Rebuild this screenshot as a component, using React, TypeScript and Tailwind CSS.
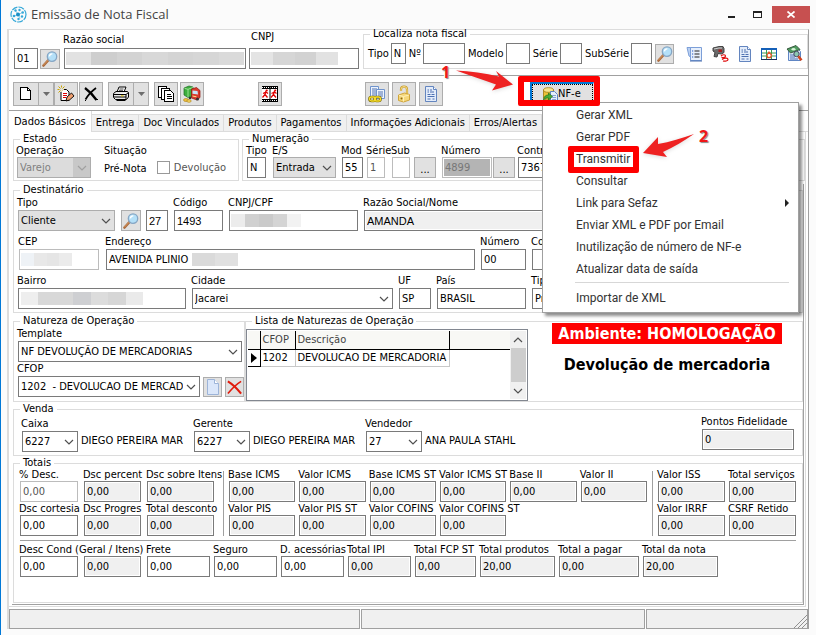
import { useId } from "react";
import type { ReactNode } from "react";
import clsx from "clsx";

// ─── Icons ────────────────────────────────────────────────────────────────────

function LogoIcon() {
  return (
    <svg width="17" height="17" viewBox="0 0 17 17" fill="none">
      <circle cx="8.500" cy="8.500" r="7.500" stroke="#35a8d8" strokeWidth="1.200" strokeDasharray="6 1" />
      <path d="M8.500 8.500 5.500 5M8.500 8.500l4-2M8.500 8.500l1.500 4M8.500 8.500l-4 1.500" stroke="#8fd0ea" />
      <circle cx="8" cy="8.500" r="2" fill="#1b8fc6" />
      <circle cx="5.500" cy="4.500" r="1.200" fill="#35a8d8" />
      <circle cx="9.500" cy="4" r="1.200" fill="#35a8d8" />
      <circle cx="12.700" cy="6.500" r="1.300" fill="#35a8d8" />
      <circle cx="12" cy="10.500" r="1.200" fill="#35a8d8" />
      <circle cx="8.500" cy="13" r="1.200" fill="#35a8d8" />
      <circle cx="4" cy="10" r="1.300" fill="#35a8d8" />
    </svg>
  );
}

function SearchIcon() {
  return (
    <svg width="16" height="16" viewBox="0 0 16 16" fill="none">
      <path d="m1.500 14.500 5-5.500" stroke="#a9683a" strokeWidth="2.600" strokeLinecap="round" />
      <path d="m1.500 14 5-5.200" stroke="#dba06a" strokeWidth="0.900" strokeLinecap="round" />
      <circle cx="10" cy="5.600" r="4.700" fill="#b4e0f8" stroke="#86a6c4" strokeWidth="1.300" />
      <path d="M7.400 5.400c.2-1.600 1.400-2.600 3-2.500" stroke="#fff" strokeWidth="1.400" />
    </svg>
  );
}

function NewIcon() {
  return (
    <svg width="14" height="16" viewBox="0 0 14 16" fill="#fff" stroke="#000" shapeRendering="crispEdges">
      <path d="M1.500 1.500h7l3 3v9h-10z" strokeWidth="1.200" />
      <path d="M8.500 1.500v3h3" fill="none" />
    </svg>
  );
}

function EditIcon() {
  return (
    <svg width="18" height="18" viewBox="0 0 18 18" fill="none">
      <path d="M1.500 1.500l2 2M5.500 5.500 7 7M7.500 1.500l-2 2M3.500 5.500l-2 2M4.500.5v2M4.500 6.500v2M.5 4.500h2M6.500 4.500h2" stroke="#caa400" />
      <path d="M4 7v8.500h8V7L9.500 4.500H7" fill="#fff" stroke="#000" />
      <path d="M6 8.500h4M6 10.500h4M6 12.500h3" stroke="#e00000" />
      <path d="m9 16 1-4 4.500-4L17 11l-4.500 4z" fill="#f0a070" stroke="#000" strokeWidth="0.900" />
    </svg>
  );
}

function CrossIcon() {
  return (
    <svg width="16" height="16" viewBox="0 0 16 16" fill="none" stroke="#000">
      <path d="M2 2c4 3 8 7 11.500 12" strokeWidth="2.200" />
      <path d="M13 2C9 5 5 9 2.500 13.500" strokeWidth="1.700" />
      <path d="M13 13.500h2M2 14.500h1" />
    </svg>
  );
}

function PrinterIcon() {
  return (
    <svg width="18" height="16" viewBox="0 0 18 16" fill="#fff" stroke="#000">
      <path d="m5 6 2-5h7l-2 5" />
      <path d="M7.500 3h4M7 4.700h4" strokeWidth="0.700" />
      <path d="M1.500 7.500 4 5.500h11.500l1 1.500v4l-2 2.500h-11l-2-2z" fill="#e8e8e8" />
      <path d="M1.500 8.500h12.500l2.500-2M2 11h12M14 8.500V13" />
      <path d="M9 9.800h2.500" stroke="#e0c000" />
      <path d="M4.500 14.500h9" />
    </svg>
  );
}

function CopiesIcon() {
  return (
    <svg width="18" height="18" viewBox="0 0 18 18" fill="#fff" stroke="#000" shapeRendering="crispEdges">
      <path d="M1.500 1.500h8v11h-8z" />
      <path d="M4.500 3.500h8v11h-8z" />
      <path d="M7.500 5.500h6l3 3v8h-9z" />
      <path d="M9.500 9.500h4M9.500 11.500h5M9.500 13.500h5" />
    </svg>
  );
}

function TruckIcon() {
  return (
    <svg width="18" height="18" viewBox="0 0 18 18">
      <path d="m1 3 5-2 4 1v9l-5 1.500L1 10z" fill="#3dae3d" stroke="#1e6b25" strokeWidth="0.700" />
      <path d="m1.500 3.300 3.500 1v8M5 4.300l5-1.800" stroke="#b4ecaa" strokeWidth="0.800" fill="none" />
      <path d="m8.500 4 5-1.500 3.500 3v7L14 15l-5.500-2z" fill="#d83a2c" stroke="#8d150d" strokeWidth="0.700" />
      <path d="m9.500 5.500 5 .5.500 3.500-5.500-.7z" fill="#c7e4f7" />
      <path d="m9.500 11 4 .8" stroke="#ffe08a" />
      <circle cx="14.500" cy="14" r="1.500" fill="#333" />
      <circle cx="7" cy="13" r="1.300" fill="#333" />
      <ellipse cx="3" cy="15" rx="2.500" ry="1.500" fill="#f0c040" stroke="#a97d10" strokeWidth="0.600" />
      <ellipse cx="6" cy="16" rx="2.200" ry="1.300" fill="#f7d765" stroke="#a97d10" strokeWidth="0.600" />
    </svg>
  );
}

function FilmIcon() {
  return (
    <svg width="18" height="18" viewBox="0 0 18 18" fill="none">
      <path d="M1 1h16v16H1z" fill="#fff" />
      <path d="M1 2.500h16M1 15.500h16" stroke="#000" strokeWidth="3" />
      <path d="M1 2.500h16M1 15.500h16" stroke="#fff" strokeDasharray="1 1" />
      <path d="M9 1v16M16.500 1v16" stroke="#000" />
      <path d="M5 6 4 9.500l-2.500 3M4 9.500l2.500 3M2 8.500 5 7l2 1.500" stroke="#e00000" strokeWidth="1.300" />
      <path d="m13.500 6-1 3.500-2.500 3M12.500 9.500l2.500 3M10.500 8.500l3-1.500 2 1.500" stroke="#e00000" strokeWidth="1.300" />
      <circle cx="5.700" cy="5.500" r="1.100" fill="#e00000" />
      <circle cx="14.200" cy="5.500" r="1.100" fill="#e00000" />
    </svg>
  );
}

function LinkDocIcon() {
  return (
    <svg width="18" height="18" viewBox="0 0 18 18" fill="#eef4fd" stroke="#6f93cc">
      <path d="M2.500 1.500h8v11h-8z" />
      <path d="M4 4h5M4 6h4M4 8h4M4 10h4" stroke="#3c62a8" strokeWidth="0.900" />
      <path d="M8.500 4.500h8v9h-8z" />
      <path d="M10 7h5M10 9h5M10 11h5" stroke="#3c62a8" strokeWidth="0.900" />
      <g fill="none" stroke="#7c6a00" strokeWidth="2.600">
        <rect x="1.500" y="12" width="6" height="4" rx="2" />
        <rect x="6.500" y="12" width="6" height="4" rx="2" />
      </g>
      <g fill="none" stroke="#f5dc2c" strokeWidth="1.300">
        <rect x="1.500" y="12" width="6" height="4" rx="2" />
        <rect x="6.500" y="12" width="6" height="4" rx="2" />
      </g>
    </svg>
  );
}

function LockIcon() {
  return (
    <svg width="16" height="18" viewBox="0 0 16 18">
      <path d="M5 6V4.500a3 3 0 0 1 6 0V9" fill="none" stroke="#c79a28" strokeWidth="2.200" />
      <path d="M5 6V4.500a3 3 0 0 1 6 0V9" fill="none" stroke="#f7dd88" />
      <path d="m2.500 10 6-2 5 1.500v5.500l-6 2-5-1.500z" fill="#f5d77a" stroke="#d0a53a" />
      <path d="m3 10.300 4.500 1.200v5M7.500 11.500l5.500-1.500" fill="none" stroke="#fff0b5" />
      <circle cx="5.500" cy="13.500" r="1" fill="#8d6a10" />
    </svg>
  );
}

function DocIcon() {
  return (
    <svg width="14" height="16" viewBox="0 0 14 16" fill="#e3ecfa" stroke="#6385bf">
      <path d="M1.500.5h8l3 3v12h-11z" />
      <path d="M9.500.5v3h3" fill="#fff" />
      <path d="M3.500 4H5M6 4h2M3.500 6H5M6 6h4M3.500 8.500h3M7.500 8.500h3M3.500 10.500h7M3.500 13h3M8.500 13h2" stroke="#3c62a8" strokeWidth="0.900" />
    </svg>
  );
}

function ListIcon() {
  return (
    <svg width="17" height="16" viewBox="0 0 17 16" fill="#e6effc" stroke="#7c9fd8">
      <path d="M1 1.500h4.500v10L3 10z" fill="#b9d0f3" />
      <path d="M4.500 1.500h11v13h-11z" />
      <path d="M8.500 5h5M8.500 8h5M8.500 11h5" stroke="#222" />
      <path d="M6 5h1.200M6 8h1.200M6 11h1.200" stroke="#2256c0" strokeWidth="1.200" />
      <path d="M4 15h12" stroke="#4b6fae" />
    </svg>
  );
}

function ScannerIcon() {
  return (
    <svg width="17" height="16" viewBox="0 0 17 16" fill="none">
      <path d="m1 2 6-1.500h4l1 2v4L9.500 8 6 7.500l-1 3.500-3-.5L3 6.500 1 5z" fill="#6a6a6a" stroke="#444" />
      <path d="m2 3 5-1h3" stroke="#cfcfcf" />
      <rect x="6.500" y="3.500" width="3.500" height="2.500" fill="#a82020" />
      <path d="M9 10c2-1.800 4.500-1.500 4.500 0s-2 1.800-4 1.300M10 13.500c3-2 6-1.500 6 0s-3 2-5 1.500" stroke="#e01010" strokeWidth="1.200" />
    </svg>
  );
}

function TableIcon() {
  return (
    <svg width="16" height="14" viewBox="0 0 16 14" fill="none">
      <path d="M.5 1.500h15v11H.5z" fill="#fff" stroke="#1560b8" />
      <path d="M0 2h16" stroke="#1560b8" strokeWidth="2" />
      <path d="M1 6h14M1 9h14M5.500 3v9M10.500 3v9" stroke="#3a9c50" />
      <path d="M6 8 8 5l2.500 3-1 2.500h-3z" fill="#fff" stroke="#e8572a" strokeWidth="1.300" />
      <path d="M0 12.500h16" stroke="#1b2f55" />
    </svg>
  );
}

function MoneyDocIcon() {
  return (
    <svg width="17" height="17" viewBox="0 0 17 17" fill="none">
      <path d="M2.500 3.500h9l3 3v9h-12z" fill="#dfeafb" stroke="#5f86c4" />
      <path d="M4 10h4M4 12h5M4 14h8" stroke="#3c62a8" strokeWidth="0.900" />
      <path d="m1 4 9-3.500 4 4L4.500 8z" fill="#4f9c60" stroke="#3a5b40" />
      <ellipse cx="7.500" cy="4.200" rx="2" ry="1.200" fill="#d8f3d8" />
      <circle cx="10.500" cy="9" r="2.700" fill="#8cc8b0" stroke="#446" />
      <path d="m12.300 11.300 3.200 4" stroke="#d0421c" strokeWidth="2.600" />
    </svg>
  );
}

function TransferIcon() {
  return (
    <svg width="16" height="16" viewBox="0 0 16 16">
      <path d="M1.500 4v8c0 1 1.800 2 5 2s5-1 5-2V4z" fill="#edc238" stroke="#9f7a0c" strokeWidth="0.800" />
      <ellipse cx="6.500" cy="4" rx="5" ry="2.300" fill="#fae48c" stroke="#9f7a0c" strokeWidth="0.800" />
      <path d="M8.500 5.500h4l3 3v7h-7z" fill="#e6effc" stroke="#5f86c4" />
      <path d="M10 9.500h4M10 11.500h4M10 13.500h4" stroke="#5f86c4" strokeWidth="0.700" />
      <path d="M1.500 14c.5-4 2.500-5 5-5V7l4 3.500-4 3.500v-2c-2 0-3.500 0-5 2z" fill="#49ac36" stroke="#1f6d18" strokeWidth="0.700" />
    </svg>
  );
}

function BlankPageIcon() {
  return (
    <svg width="14" height="16" viewBox="0 0 14 16" fill="#dbe7fa" stroke="#9db4d8">
      <path d="M1.500.5h7l4 4v11h-11z" />
      <path d="M8.500.5v4h4" fill="#fff" />
    </svg>
  );
}

function DeleteIcon() {
  return (
    <svg width="18" height="18" viewBox="0 0 18 18" fill="none" stroke="#e01b0c">
      <path d="M2 3c5 3 10 8 14 13" strokeWidth="2.200" />
      <path d="M16 3C11 6 6 11 2 16" strokeWidth="1.700" />
    </svg>
  );
}

function Chevron({ up, light }: { up?: boolean; light?: boolean }) {
  return (
    <svg width="10" height="6" viewBox="0 0 10 6" fill="none" stroke={light ? "#a0a0a0" : "#505050"} strokeWidth="1.200">
      <path d={up ? "m1 5 4-4 4 4" : "m1 1 4 4 4-4"} />
    </svg>
  );
}

// ─── Form pieces ──────────────────────────────────────────────────────────────

function Group({ title, className, children }: { title: string; className?: string; children: ReactNode }) {
  return (
    <fieldset className={clsx("min-w-0 border border-[#dcdcdc]", className)}>
      <legend className="ml-1.5 px-[3px] leading-3">{title}</legend>
      {children}
    </fieldset>
  );
}

type Tone = "normal" | "readonly" | "light" | "disabled";

interface BoxProps {
  id?: string;
  label?: string;
  value?: string;
  tone?: Tone;
  plain?: boolean;
  className?: string;
}

function Box({ id, label, value = "", tone = "normal", plain, className }: BoxProps) {
  return (
    <input
      id={id}
      aria-label={label}
      defaultValue={value}
      readOnly={tone === "readonly"}
      disabled={tone === "disabled"}
      className={clsx(
        "h-[21px] min-w-0 border px-0.5 outline-none",
        plain && "font-['Liberation_Sans',sans-serif]",
        tone === "normal" && "border-[#7a7a7a] bg-white",
        tone === "readonly" && "border-[#7a7a7a] bg-[#f0f0f0] inset-ring inset-ring-white",
        tone === "light" && "border-[#bcbcbc] bg-white text-[#555]",
        tone === "disabled" && "border-[#bcbcbc] bg-[#b4b4b4] text-[#777] inset-ring inset-ring-white",
        className,
      )}
    />
  );
}

interface FieldProps extends Omit<BoxProps, "id" | "label"> {
  label: string;
  labelClass?: string;
  children?: ReactNode;
}

function Field({ label, labelClass, className, children, ...box }: FieldProps) {
  const id = useId();
  return (
    <div className={clsx("relative flex shrink-0 flex-col", className)}>
      <label htmlFor={id} className={clsx("-ml-px whitespace-nowrap", labelClass)}>{label}</label>
      <Box id={id} className="w-full" {...box} />
      {children}
    </div>
  );
}

// Pixelated blocks covering private data
function Mosaic({ blocks, className }: { blocks: string[]; className?: string }) {
  return (
    <div className={clsx("absolute bottom-1 flex h-[13px]", className)}>
      {blocks.map((b, i) => (
        <span key={i} className={clsx("flex-1", b)} />
      ))}
    </div>
  );
}

interface SelectProps {
  label: string;
  value: string;
  tone?: "white" | "gray" | "disabled";
  className?: string;
}

function SelectField({ label, value, tone = "white", className }: SelectProps) {
  const id = useId();
  return (
    <div className={clsx("flex shrink-0 flex-col", className)}>
      <label htmlFor={id} className="-ml-px whitespace-nowrap">{label}</label>
      <div className="relative">
        <select
          id={id}
          disabled={tone === "disabled"}
          className={clsx(
            "block h-[21px] w-full appearance-none border pl-0.5 pr-4 outline-none",
            tone === "white" && "border-[#7a7a7a] bg-white",
            tone === "gray" && "border-[#adadad] bg-[#e1e1e1]",
            tone === "disabled" && "border-[#adadad] bg-[#dcdcdc] text-[#808080] opacity-100",
          )}
        >
          <option>{value}</option>
        </select>
        <span
          className={clsx(
            "pointer-events-none absolute inset-y-px right-px flex w-[17px] items-center justify-center",
            tone === "disabled" && "bg-[#c8c8c8]",
          )}
        >
          <Chevron light={tone === "disabled"} />
        </span>
      </div>
    </div>
  );
}

function IconButton({ label, className, children }: { label: string; className?: string; children: ReactNode }) {
  return (
    <button
      aria-label={label}
      className={clsx("flex shrink-0 items-center justify-center border border-[#adadad] bg-[#e1e1e1]", className)}
    >
      {children}
    </button>
  );
}

function MoreButton({ label, className }: { label: string; className?: string }) {
  return (
    <button
      aria-label={label}
      className={clsx("h-[21px] w-[22px] shrink-0 border border-[#adadad] bg-[#e1e1e1] pt-1 leading-3", className)}
    >
      ...
    </button>
  );
}

function SplitButton({ label, children }: { label: string; children: ReactNode }) {
  return (
    <div className="flex">
      <IconButton label={label} className="h-6 w-[26px]">{children}</IconButton>
      <IconButton label={`${label} opções`} className="-ml-px h-6 w-4">
        <svg width="7" height="4" viewBox="0 0 7 4" fill="#6d6d6d"><path d="M0 0h7L3.500 4z" /></svg>
      </IconButton>
    </div>
  );
}

// ─── Title bar, header and toolbar ────────────────────────────────────────────

function TitleBar() {
  return (
    <header className="flex h-[29px] items-start pl-[9px] pr-[6px] pt-1.5">
      <LogoIcon />
      <h1 className="ml-1 grow font-['Open_Sans',sans-serif] text-[13px] leading-4 text-[#444]">Emissão de Nota Fiscal</h1>
      <button aria-label="Minimizar" className="flex h-[17px] w-6 items-center justify-center">
        <span className="mt-1 h-0.5 w-[7px] bg-[#222]" />
      </button>
      <button aria-label="Maximizar" className="ml-0.5 flex h-[17px] w-6 items-center justify-center">
        <span className="h-[7px] w-[9px] border border-t-2 border-[#222]" />
      </button>
      <button aria-label="Fechar" className="ml-[3px] flex h-[17px] w-[38px] items-center justify-center bg-[#c75050]">
        <svg width="8" height="7" viewBox="0 0 8 7" stroke="#fff" strokeWidth="1.700"><path d="m.5.500 7 6M7.500.5l-7 6" /></svg>
      </button>
    </header>
  );
}

const searchFields = [
  { label: "Tipo", value: "N", width: "w-[15px]" },
  { label: "Nº", value: "", width: "w-[42px]" },
  { label: "Modelo", value: "", width: "w-6" },
  { label: "Série", value: "", width: "w-[22px]" },
  { label: "SubSérie", value: "", width: "w-[21px]" },
];

function SearchHeader() {
  return (
    <section className="flex h-[46px] items-start border-b border-[#a0a0a0] pl-[5px]">
      <Box label="Empresa" value="01" className="mt-[18px] w-6" />
      <IconButton label="Buscar empresa" className="ml-0.5 mt-[19px] size-5"><SearchIcon /></IconButton>
      <Field label="Razão social" className="ml-1 mt-[3px] w-[182px]" labelClass="mb-px leading-[14px]">
        <Mosaic
          className="left-0.5 w-[178px]"
          blocks={["bg-[#e2e2e2]", "bg-[#cecece]", "bg-[#d3d3d3]", "bg-[#d8d8d8]", "bg-[#d4d4d4]", "bg-[#d6d6d6]", "bg-[#dadada]"]}
        />
      </Field>
      <Field label="CNPJ" className="ml-[3px] w-[110px]" labelClass="mb-1 pl-[3px] leading-[14px]">
        <Mosaic className="left-0.5 w-[87px]" blocks={["bg-[#e4e4e4]", "bg-[#d6d6d6]", "bg-[#d2d2d2]", "bg-[#e2e2e2]"]} />
      </Field>
      <Group title="Localiza nota fiscal" className="-mt-0.5 ml-1 flex-1">
        <div className="flex items-center pb-1 pl-1 pt-[3px]">
          {searchFields.map((f) => (
            <label key={f.label} className="mr-[3px] flex items-center gap-0.5 whitespace-nowrap">
              {f.label}
              <Box value={f.value} className={f.width} />
            </label>
          ))}
          <IconButton label="Localizar" className="h-5 w-[19px]"><SearchIcon /></IconButton>
          <div className="flex flex-1 items-center justify-between pl-3 pr-1">
            <button aria-label="Listagem"><ListIcon /></button>
            <button aria-label="Leitor"><ScannerIcon /></button>
            <button aria-label="Documento"><DocIcon /></button>
            <button aria-label="Planilha"><TableIcon /></button>
            <button aria-label="Financeiro"><MoneyDocIcon /></button>
          </div>
        </div>
      </Group>
    </section>
  );
}

const menuItems = [
  "Gerar XML",
  "Gerar PDF",
  "Transmitir",
  "Consultar",
  "Link para Sefaz",
  "Enviar XML e PDF por Email",
  "Inutilização de número de NF-e",
  "Atualizar data de saída",
];

function NfeMenu() {
  return (
    <ul className="absolute left-3 top-5 z-10 w-[257px] border border-[#a0a0a0] bg-white pb-[3px] pt-px font-['Roboto',sans-serif] text-[12px] leading-[22px] text-[#333] shadow-[3px_3px_3px_rgba(0,0,0,0.45)]">
      {menuItems.map((item) => (
        <li key={item} className="relative">
          <button className="flex w-full items-center justify-between pl-[33px] pr-[9px] text-left">
            {item}
            {item === "Link para Sefaz" && (
              <svg width="4" height="8" viewBox="0 0 4 8" fill="#222"><path d="M0 0v8l4-4z" /></svg>
            )}
          </button>
          {item === "Transmitir" && (
            <span className="pointer-events-none absolute -top-0.5 left-[25px] h-[27px] w-[71px] rounded-xs border-[6px] border-[#fe0000]" />
          )}
        </li>
      ))}
      <li className="ml-8 mr-[9px] mt-0.5 border-t border-[#d7d7d7]" />
      <li className="mt-1">
        <button className="w-full pl-[33px] text-left">Importar de XML</button>
      </li>
    </ul>
  );
}

function Toolbar() {
  return (
    <section className="flex h-[35px] items-start border-b border-[#a0a0a0] pl-1 pt-1.5">
      <SplitButton label="Novo"><NewIcon /></SplitButton>
      <IconButton label="Editar" className="size-6"><EditIcon /></IconButton>
      <IconButton label="Excluir" className="ml-px size-6"><CrossIcon /></IconButton>
      <div className="ml-[5px]"><SplitButton label="Imprimir"><PrinterIcon /></SplitButton></div>
      <IconButton label="Duplicar" className="ml-[5px] size-6"><CopiesIcon /></IconButton>
      <IconButton label="Transporte" className="ml-0.5 size-6"><TruckIcon /></IconButton>
      <IconButton label="Sair" className="ml-[54px] size-6"><FilmIcon /></IconButton>
      <IconButton label="Vincular" className="ml-[83px] size-6"><LinkDocIcon /></IconButton>
      <IconButton label="Desbloquear" className="ml-[3px] size-6"><LockIcon /></IconButton>
      <IconButton label="Detalhes" className="ml-[3px] size-6"><DocIcon /></IconButton>
      <div className="relative ml-[87px]">
        <button className="flex h-6 w-16 items-center border-2 border-r border-[#0078d7] border-r-[#e1e1e1] bg-[#e1e1e1]">
          <span className="flex h-full w-full items-center border border-dotted border-black pl-[9px]">
            <TransferIcon />NF-e
          </span>
        </button>
        <NfeMenu />
        <span className="pointer-events-none absolute -left-3 -right-1.5 -top-1.5 bottom-0 z-20 rounded-xs border-[6px] border-[#fe0000]" />
      </div>
    </section>
  );
}

// ─── Tabs ─────────────────────────────────────────────────────────────────────

const tabs = ["Entrega", "Doc Vinculados", "Produtos", "Pagamentos", "Informações Adicionais", "Erros/Alertas"];

function Tabs() {
  return (
    <nav role="tablist" className="flex h-[21px] items-end">
      <button role="tab" aria-selected className="h-[21px] border-r border-[#dcdcdc] px-[5px]">Dados Básicos</button>
      {tabs.map((t) => (
        <button
          key={t}
          role="tab"
          aria-selected={false}
          className="h-[18px] whitespace-nowrap border border-l-0 border-[#dcdcdc] bg-[#f0f0f0] px-1"
        >
          {t}
        </button>
      ))}
      <span className="flex-1 border-b border-[#dcdcdc]" />
    </nav>
  );
}

// ─── Form sections ────────────────────────────────────────────────────────────

function StateRow() {
  return (
    <div className="flex gap-[3px] pl-1 pt-px leading-3">
      <Group title="Estado" className="w-[226px] shrink-0 pb-0.5">
        <div className="flex pl-[3px]">
          <SelectField label="Operação" value="Varejo" tone="disabled" className="w-[74px]" />
          <div className="ml-[13px] flex flex-col">
            <span>Situação</span>
            <span className="mt-1.5">Pré-Nota</span>
          </div>
          <label className="ml-2.5 mt-3 flex items-center gap-1 text-[#555]">
            <input type="checkbox" className="size-[13px] appearance-none border border-[#999] bg-white" />
            Devolução
          </label>
        </div>
      </Group>
      <Group title="Numeração" className="flex-1 pb-0.5">
        <div className="flex items-end pl-1">
          <Field label="Tipo" value="N" className="w-[19px]" />
          <SelectField label="E/S" value="Entrada" tone="gray" className="ml-[7px] w-[63px]" />
          <Field label="Mod" value="55" className="ml-1.5 w-[21px]" />
          <Field label="Série" value="1" tone="light" className="ml-1 w-[18px]" />
          <Field label="Sub" tone="light" className="ml-[7px] w-[18px]" />
          <MoreButton label="Buscar série" className="ml-1" />
          <Field label="Número" value="4899" tone="disabled" className="ml-1.5 w-[50px]" />
          <MoreButton label="Buscar número" className="ml-px" />
          <Field label="Contr" value="7367" className="ml-[3px] w-[60px]" />
        </div>
      </Group>
    </div>
  );
}

function Recipient() {
  return (
    <Group title="Destinatário" className="pb-[3px] leading-[14px]">
      <div className="flex flex-col gap-1 pl-1 pr-5">
        <div className="flex items-end">
          <SelectField label="Tipo" value="Cliente" tone="gray" className="w-[97px]" />
          <IconButton label="Buscar cliente" className="ml-1.5 h-[21px] w-5"><SearchIcon /></IconButton>
          <Box label="Filial" value="27" plain className="ml-[5px] w-[22px]" />
          <Field label="Código" value="1493" plain className="ml-1.5 w-[49px]" />
          <Field label="CNPJ/CPF" className="ml-1.5 w-[129px]">
            <Mosaic className="left-0.5 w-[70px]" blocks={["bg-[#ececec]", "bg-[#d0d0d0]", "bg-[#cacaca]", "bg-[#d4d4d4]", "bg-[#f2f2f2]"]} />
          </Field>
          <Field label="Razão Social/Nome" value="AMANDA" tone="readonly" plain className="ml-1.5 flex-1" />
        </div>
        <div className="flex items-end">
          <Field label="CEP" tone="light" className="ml-px w-20">
            <Mosaic className="left-0.5 w-[51px]" blocks={["bg-[#eef2f6]", "bg-[#e8e8e8]", "bg-[#e5e5e5]", "bg-[#ebebeb]"]} />
          </Field>
          <Field label="Endereço" value="AVENIDA PLINIO" className="ml-[7px] w-[369px]">
            <Mosaic className="left-[86px] w-[46px]" blocks={["bg-[#dadada]", "bg-[#e0e0e0]"]} />
          </Field>
          <Field label="Número" value="00" className="ml-1.5 w-[45px]" />
          <Field label="Co" className="ml-1.5 flex-1" />
        </div>
        <div className="flex items-end">
          <Field label="Bairro" className="w-[168px]">
            <Mosaic
              className="left-[3px] w-[122px]"
              blocks={["bg-[#eeeeee]", "bg-[#d8d8d8]", "bg-[#d8d8d8]", "bg-[#cecfd2]", "bg-[#dcdcdc]", "bg-[#d6d6d6]", "bg-[#eaeaea]"]}
            />
          </Field>
          <SelectField label="Cidade" value="Jacarei" className="ml-1.5 w-[201px]" />
          <Field label="UF" value="SP" className="ml-1.5 w-8" />
          <Field label="País" value="BRASIL" className="ml-1.5 w-[89px]" />
          <Field label="Tip" value="Pr" className="ml-1.5 flex-1" />
        </div>
      </div>
    </Group>
  );
}

function OperationRow() {
  return (
    <div className="mt-0.5 flex leading-[14px]">
      <Group title="Natureza de Operação" className="w-[232px] shrink-0 pb-[3px]">
        <div className="pl-1 pr-0.5">
          <SelectField label="Template" value="NF DEVOLUÇÃO DE MERCADORIAS" />
          <div className="flex items-end gap-[3px]">
            <SelectField label="CFOP" value={"1202\u00a0\u00a0- DEVOLUCAO DE MERCADORIA"} className="w-[182px]" />
            <IconButton label="Nova CFOP" className="h-5 w-[19px]"><BlankPageIcon /></IconButton>
            <IconButton label="Remover CFOP" className="h-5 w-[19px]"><DeleteIcon /></IconButton>
          </div>
        </div>
      </Group>
      <Group title="Lista de Naturezas de Operação" className="flex-1">
        <div className="flex items-start">
          <div className="mt-0.5 flex h-[72px] w-[282px] shrink-0 border border-[#828790] p-px">
            <div className="flex-1 overflow-hidden">
              <table className="w-full table-fixed border-collapse text-left">
                <thead className="border-b border-black bg-[#f8f8f5] text-[#444]">
                  <tr className="h-[18px]">
                    <th className="w-3 border-r border-black" />
                    <th className="w-[35px] border-r border-black px-0.5 font-normal">CFOP</th>
                    <th className="w-[154px] border-r border-black px-0.5 font-normal">Descrição</th>
                    <th />
                  </tr>
                </thead>
                <tbody>
                  <tr className="h-[17px]">
                    <td className="border-b border-r border-black">
                      <svg className="mx-auto" width="6" height="10" viewBox="0 0 6 10"><path d="M0 0v10l6-5z" /></svg>
                    </td>
                    <td className="border-b border-r border-[#c8c8c8] px-0.5">1202</td>
                    <td className="whitespace-nowrap border-b border-r border-[#c8c8c8] px-0.5">DEVOLUCAO DE MERCADORIA</td>
                    <td />
                  </tr>
                </tbody>
              </table>
            </div>
            <div className="flex w-4 flex-col items-center bg-[#f0f0f0]">
              <span className="flex h-[17px] items-center"><Chevron up /></span>
              <span className="w-[15px] flex-1 bg-[#cdcdcd]" />
              <span className="flex h-[17px] items-center"><Chevron /></span>
            </div>
          </div>
          <div className="flex flex-1 flex-col items-center gap-2.5 pl-1 text-[16px] leading-[21px] font-bold whitespace-nowrap">
            <strong className="-mt-1 bg-[#fe0000] px-1.5 text-white">Ambiente: HOMOLOGAÇÃO</strong>
            <strong>Devolução de mercadoria</strong>
          </div>
        </div>
      </Group>
    </div>
  );
}

const staff = [
  { label: "Caixa", code: "6227", name: "DIEGO PEREIRA MAR" },
  { label: "Gerente", code: "6227", name: "DIEGO PEREIRA MAR" },
  { label: "Vendedor", code: "27", name: "ANA PAULA STAHL" },
];

function Sale() {
  return (
    <Group title="Venda" className="mt-px pb-[3px] leading-[14px]">
      <div className="flex items-start justify-between pl-2 pr-2">
        <div className="flex pt-0.5">
          {staff.map((s) => (
            <div key={s.label} className="flex w-[172px] items-end gap-[3px]">
              <SelectField label={s.label} value={s.code} className="w-14" />
              <span className="pb-1 whitespace-nowrap">{s.name}</span>
            </div>
          ))}
        </div>
        <Field label="Pontos Fidelidade" value="0" tone="readonly" className="w-[92px]" />
      </div>
    </Group>
  );
}

const taxes = [
  "Base ICMS", "Valor ICMS", "Base ICMS ST", "Valor ICMS ST", "Base II", "Valor II",
  "Valor PIS", "Valor PIS ST", "Valor COFINS", "Valor COFINS ST",
];

const services = ["Valor ISS", "Total serviços", "Valor IRRF", "CSRF Retido"];

function Totals() {
  return (
    <Group title="Totais" className="mt-px pb-[25px] leading-3">
      <div className="pl-1.5 pr-[6px]">
        <div className="flex">
          <div className="grid grid-cols-[58px_57px_67px] gap-x-1.5 gap-y-px">
            <Field label="% Desc." value="0,00" tone="light" />
            <Field label="Dsc percent" value="0,00" tone="readonly" />
            <Field label="Dsc sobre Itens" value="0,00" tone="readonly" />
            <Field label="Dsc cortesia" value="0,00" />
            <Field label="Dsc Progres" value="0,00" tone="readonly" />
            <Field label="Total desconto" value="0,00" tone="readonly" />
          </div>
          <div className="ml-[9px] mr-[5px] mt-0.5 border-l border-[#a0a0a0]" />
          <div className="grid flex-1 grid-cols-6 gap-x-1 gap-y-px">
            {taxes.map((t) => (
              <Field key={t} label={t} value="0,00" tone="readonly" />
            ))}
          </div>
          <div className="mx-[5px] mt-0.5 border-l border-[#a0a0a0]" />
          <div className="grid w-[138px] grid-cols-2 gap-x-1 gap-y-px">
            {services.map((s) => (
              <Field key={s} label={s} value="0,00" tone="readonly" />
            ))}
          </div>
        </div>
        <hr className="mt-1 border-[#a0a0a0]" />
        <div className="flex gap-1 pt-[3px]">
          <div className="flex gap-1.5">
            <Field label="Desc Cond (Geral / Itens)" value="0,00" className="w-[58px]" />
            <div className="flex w-[57px] items-end">
              <Box label="Desconto itens" value="0,00" tone="readonly" className="w-full" />
            </div>
            <Field label="Frete" value="0,00" className="w-[63px]" />
          </div>
          <Field label="Seguro" value="0,00" className="w-[63px]" />
          <Field label="D. acessórias" value="0,00" className="w-[63px]" />
          <Field label="Total IPI" value="0,00" tone="readonly" className="w-[63px]" />
          <Field label="Total FCP ST" value="0,00" tone="readonly" className="w-[61px]" />
          <Field label="Total produtos" value="20,00" tone="readonly" className="w-[75px]" />
          <Field label="Total a pagar" value="0,00" tone="readonly" className="w-20" />
          <Field label="Total da nota" value="20,00" tone="readonly" className="w-[75px]" />
        </div>
      </div>
    </Group>
  );
}

function StatusBar() {
  return (
    <footer className="mt-0.5 flex h-5 gap-px">
      <span className="flex-[353] border border-[#a0a0a0] bg-[#f0f0f0]" />
      <span className="flex-[284] border border-[#a0a0a0] bg-[#f0f0f0]" />
      <span className="flex flex-[162] items-end justify-end border border-[#a0a0a0] bg-[#f0f0f0]">
        <svg width="13" height="13" viewBox="0 0 13 13" stroke="#909090"><path d="M0 13 13 0M4 13l9-9M8 13l5-5" /></svg>
      </span>
    </footer>
  );
}

// ─── Callouts drawn over the window ───────────────────────────────────────────

function Callout({ n, className }: { n: string; className: string }) {
  return (
    <span
      className={clsx(
        "absolute z-30 font-['Open_Sans',sans-serif] text-[16px] leading-4 font-bold text-[#f01818] [text-shadow:1px_1px_1px_#888,-1px_-1px_0_#fff,1px_-1px_0_#fff,-1px_1px_0_#fff]",
        className,
      )}
    >
      {n}
    </span>
  );
}

function Callouts() {
  return (
    <div className="pointer-events-none">
      <Callout n="1" className="left-[440px] top-[64px]" />
      <svg className="absolute left-[454px] top-[68px] z-30 drop-shadow-sm" width="62" height="26" viewBox="0 0 62 26" fill="#ee2222">
        <path d="M1 2.500C15 3 30 5 44 8.500L41 3l17 13.500-21 6 4-6C28 12 14 7 1 2.500z" />
      </svg>
      <Callout n="2" className="left-[698px] top-[128px]" />
      <svg className="absolute left-[641px] top-[131px] z-30 drop-shadow-sm" width="54" height="30" viewBox="0 0 54 30" fill="#ee2222">
        <path d="M52 3C42 10 32 16 21 21l4 5L1 22 16 6v7c12-2 24-6 36-10z" />
      </svg>
    </div>
  );
}

// ─── Window ───────────────────────────────────────────────────────────────────

export default function App() {
  return (
    <div className="relative min-h-screen border-l border-[#0078d7] bg-[#fbfbfb] font-['DejaVu_Sans_Condensed','DejaVu_Sans',sans-serif] text-[11px] leading-[14px] text-black">
      <TitleBar />
      <main className="ml-1.5 mr-[7px] border-l-2 border-r border-t border-l-[#dcdcdc] border-r-[#a0a0a0] border-t-[#dcdcdc] bg-white">
        <SearchHeader />
        <Toolbar />
        <Tabs />
        <div className="mr-0.5 border-b border-r border-[#dcdcdc] pb-px">
          <StateRow />
          <div className="ml-[3px] mr-px mt-[3px] border-b border-r border-[#a0a0a0] pb-px pl-px">
            <Recipient />
            <OperationRow />
            <Sale />
            <Totals />
          </div>
        </div>
        <StatusBar />
      </main>
      <Callouts />
    </div>
  );
}
